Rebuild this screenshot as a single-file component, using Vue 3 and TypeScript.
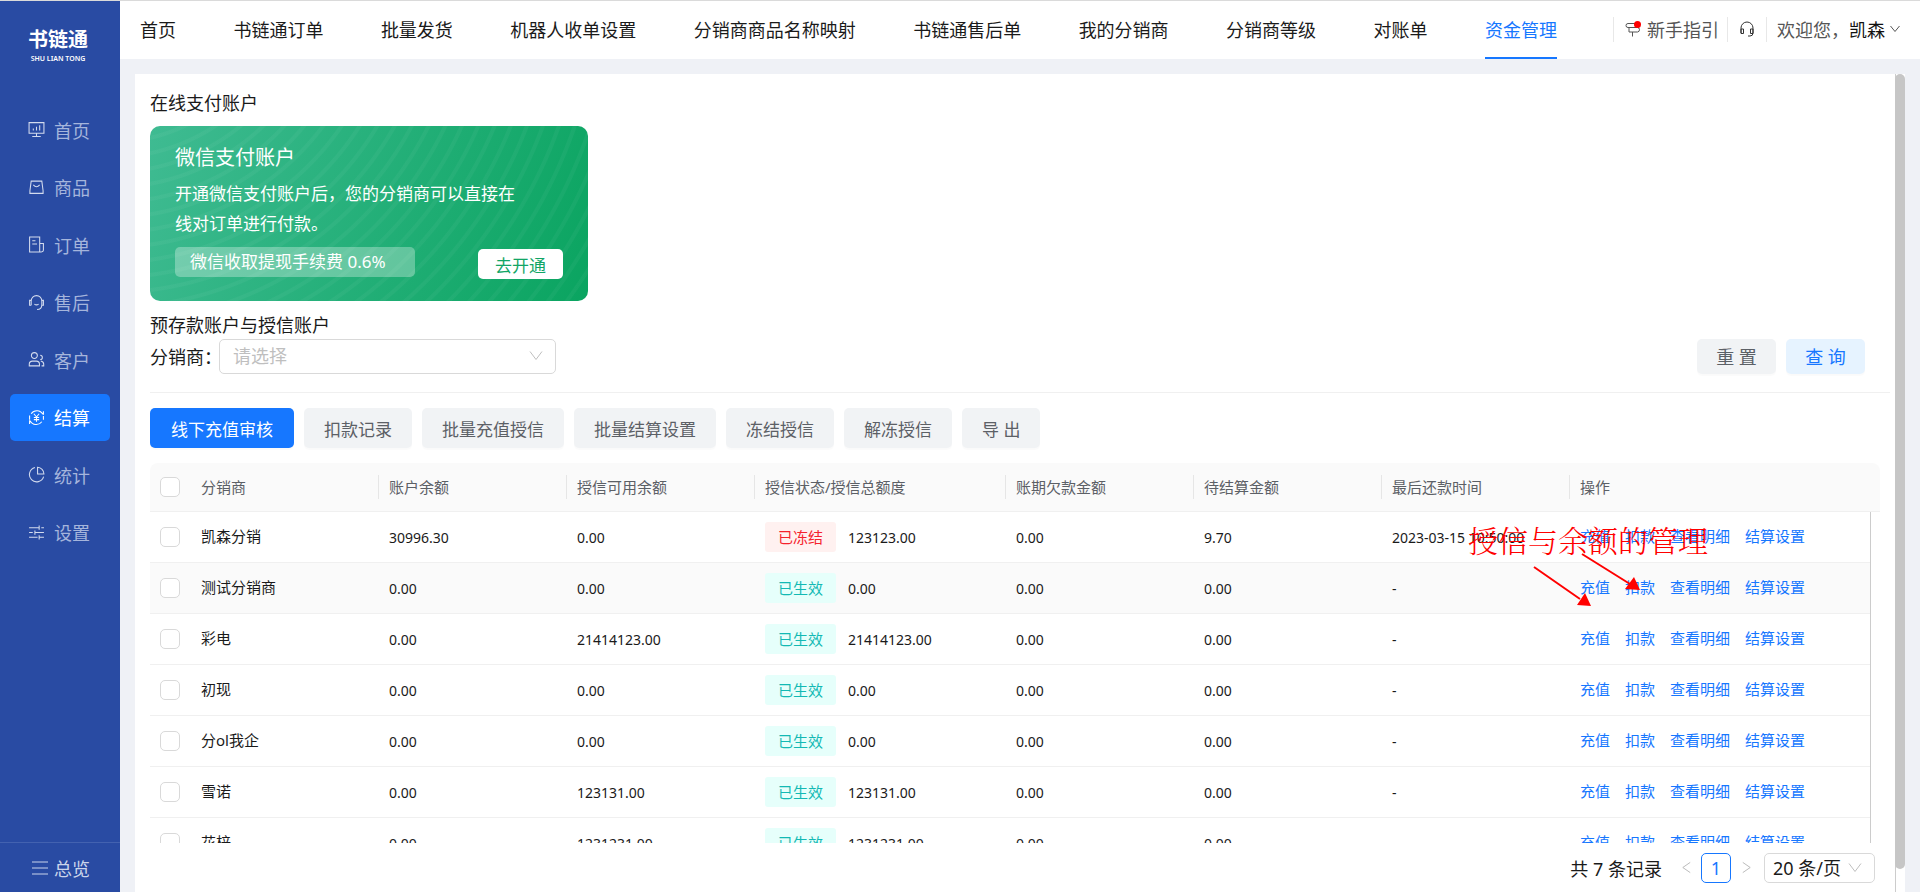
<script setup lang="ts">
import { ref } from 'vue'

interface SideItem { label: string; icon: string }
interface Account {
  name: string
  balance: string
  available: string
  frozen: boolean
  total: string
  debt: string
  pending: string
  repaid: string
}

const topNav: string[] = ['首页', '书链通订单', '批量发货', '机器人收单设置', '分销商商品名称映射', '书链通售后单', '我的分销商', '分销商等级', '对账单', '资金管理']
const activeTop = ref('资金管理')

const sideNav: SideItem[] = [
  { label: '首页', icon: 'M1 1.5h14v10H1zM8 11.5v3M4 14.5h8M5 9V7M8 9V5.500M11 9V4' },
  { label: '商品', icon: 'M3 2h10l1.200 9v2.500H1.800V11zM5 5.500q3 3.500 6 0' },
  { label: '订单', icon: 'M1.500 1h9.500v14H1.500zM11 7h3.500v6.500q0 1.500-2 1.500H9M4 4.500h3M4 7.500h4.500' },
  { label: '售后', icon: 'M3 10.500V6.500a5 5 0 0 1 10 0v3.500c0 3-2 4.500-4.500 4.500M3 6H1.500v4.500H3M13 6h1.500v4.500H13M6 9.500q2 1.500 4 0' },
  { label: '客户', icon: 'M6 1.500a2.800 2.800 0 1 1 0 5.600a2.800 2.800 0 1 1 0-5.600M1.200 14v-1.500q0-3 3-3h3.600q3 0 3 3V14zM11.500 4a2 2 0 1 1 0 4M12 9.500q2.800.5 2.800 3V14h-2' },
  { label: '结算', icon: 'M3 4.500A6.500 6.500 0 0 1 14 5M14.500 2v3.500M13 12A6.500 6.500 0 0 1 2 11M1.500 14v-3.500M1.500 10V6M14.500 10V6.500M5.500 4.500L8 7.500l2.500-3M8 7.500V12M5.500 8h5M5.500 10h5' },
  { label: '统计', icon: 'M6.500 1.500A6.800 6.800 0 1 0 14.700 10M9 1.200V7.500h6A6.300 6.300 0 0 0 9 1.200z' },
  { label: '设置', icon: 'M1 3.500h9M12.500 3.500H15M10.500 1.500v4M1 8h3.500M6.500 8H15M6.500 6v4M1 12.500h8M11 12.500h4M10.500 10.500v4' }
]
const activeSide = ref('结算')

const bulkActions: string[] = ['线下充值审核', '扣款记录', '批量充值授信', '批量结算设置', '冻结授信', '解冻授信', '导 出']
const columns: string[] = ['分销商', '账户余额', '授信可用余额', '授信状态/授信总额度', '账期欠款金额', '待结算金额', '最后还款时间', '操作']
const rowActions: string[] = ['充值', '扣款', '查看明细', '结算设置']

const account = (name: string, credit: string, extra: Partial<Account> = {}): Account => ({
  name, balance: '0.00', available: credit, frozen: false, total: credit, debt: '0.00', pending: '0.00', repaid: '-', ...extra
})

const accounts: Account[] = [
  account('凯森分销', '0.00', { balance: '30996.30', frozen: true, total: '123123.00', pending: '9.70', repaid: '2023-03-15 10:50:00' }),
  account('测试分销商', '0.00'),
  account('彩电', '21414123.00'),
  account('初现', '0.00'),
  account('分ol我企', '0.00'),
  account('雪诺', '123131.00'),
  account('花梓', '1231231.00')
]
const selected = ref<string[]>([])
const toggleAll = (event: Event) => {
  selected.value = (event.target as HTMLInputElement).checked ? accounts.map((a) => a.name) : []
}
</script>

<template>
  <div class="shell">
    <aside class="side">
      <div class="brand">
        <strong>书链通</strong>
        <span>SHU LIAN TONG</span>
      </div>
      <nav class="side-nav">
        <a v-for="item in sideNav" :key="item.label" href="#" :class="{ active: item.label === activeSide }" @click.prevent="activeSide = item.label">
          <svg viewBox="0 0 16 16" aria-hidden="true"><path :d="item.icon" /></svg>
          <span>{{ item.label }}</span>
        </a>
      </nav>
      <button class="overview" type="button">
        <svg viewBox="0 0 16 16" aria-hidden="true"><path d="M0 2h16M0 8h16M0 14h16" /></svg>
        <span>总览</span>
      </button>
    </aside>

    <div class="main">
      <header class="top">
        <nav class="top-nav">
          <a v-for="item in topNav" :key="item" href="#" :class="{ active: item === activeTop }" @click.prevent="activeTop = item">{{ item }}</a>
        </nav>
        <div class="tools">
          <a class="guide" href="#">
            <svg viewBox="0 0 16 16" aria-hidden="true">
              <path d="M10 2.500H3q-2 0-2 2t2 2h10.500v-1M4 6.500v4.500h8.500q2-.2 2-2.300t-2-2.200M7.500 11v4.500" />
              <circle cx="12.500" cy="3.500" r="3.500" />
            </svg>
            <span>新手指引</span>
          </a>
          <button class="support" type="button" aria-label="客服">
            <svg viewBox="0 0 16 16" aria-hidden="true"><path d="M2 12V7a6 6 0 0 1 12 0v5q0 3-3 3H9M2 8h2.500v4.500H2zM14 8h-2.500v4.500H14z" /></svg>
          </button>
          <button class="user" type="button">
            <span>欢迎您，</span><b>凯森</b>
            <svg viewBox="0 0 10 10" aria-hidden="true"><path d="M0.500 2l4.500 5.500L9.500 2" /></svg>
          </button>
        </div>
      </header>

      <div class="page">
        <main class="panel">
          <h2>在线支付账户</h2>
          <section class="pay-card">
            <h3>微信支付账户</h3>
            <p>开通微信支付账户后，您的分销商可以直接在线对订单进行付款。</p>
            <div class="pay-foot">
              <span class="fee">微信收取提现手续费 0.6%</span>
              <button type="button">去开通</button>
            </div>
          </section>

          <h2 class="second">预存款账户与授信账户</h2>
          <form class="filter" @submit.prevent>
            <label for="dealer">分销商：</label>
            <div class="select dealer">
              <select id="dealer"><option>请选择</option></select>
              <svg viewBox="0 0 14 14" aria-hidden="true"><path d="M1 2.500l6 8 6-8" /></svg>
            </div>
            <button class="btn reset" type="reset">重 置</button>
            <button class="btn query" type="submit">查 询</button>
          </form>

          <div class="bulk">
            <button v-for="(label, i) in bulkActions" :key="label" type="button" class="btn" :class="{ primary: i === 0 }">{{ label }}</button>
          </div>

          <div class="grid-head">
            <table>
              <colgroup><col class="c-check"><col v-for="c in columns" :key="c" :class="{ 'c-status': c.includes('/'), 'c-ops': c === '操作' }"></colgroup>
              <thead>
                <tr>
                  <th class="check"><input type="checkbox" aria-label="全选" @change="toggleAll"></th>
                  <th v-for="c in columns" :key="c" scope="col">{{ c }}</th>
                </tr>
              </thead>
            </table>
          </div>
          <div class="grid-body">
            <table aria-label="分销商账户">
              <colgroup><col class="c-check"><col v-for="c in columns" :key="c" :class="{ 'c-status': c.includes('/'), 'c-ops': c === '操作' }"></colgroup>
              <tbody>
                <tr v-for="(row, i) in accounts" :key="row.name" :class="{ hover: i === 1 }">
                  <td class="check"><input v-model="selected" type="checkbox" :value="row.name" :aria-label="row.name"></td>
                  <td class="text">{{ row.name }}</td>
                  <td class="num">{{ row.balance }}</td>
                  <td class="num">{{ row.available }}</td>
                  <td><span class="tag" :class="{ frozen: row.frozen }">{{ row.frozen ? '已冻结' : '已生效' }}</span><span class="num">{{ row.total }}</span></td>
                  <td class="num">{{ row.debt }}</td>
                  <td class="num">{{ row.pending }}</td>
                  <td class="num">{{ row.repaid }}</td>
                  <td class="text"><div class="ops"><a v-for="op in rowActions" :key="op" href="#" @click.prevent>{{ op }}</a></div></td>
                </tr>
              </tbody>
            </table>
          </div>

          <footer class="pager">
            <span class="count">共 7 条记录</span>
            <button type="button" class="arrow" aria-label="上一页"><svg viewBox="0 0 14 14" aria-hidden="true"><path d="M11 1.500L3 7l8 5.500" /></svg></button>
            <button type="button" class="current">1</button>
            <button type="button" class="arrow" aria-label="下一页"><svg viewBox="0 0 14 14" aria-hidden="true"><path d="M3 1.500L11 7l-8 5.500" /></svg></button>
            <div class="select size">
              <select aria-label="每页条数"><option>20 条/页</option></select>
              <svg viewBox="0 0 14 14" aria-hidden="true"><path d="M1 2.500l6 8 6-8" /></svg>
            </div>
          </footer>
        </main>
        <div class="track"><div class="thumb"></div></div>
      </div>
    </div>

    <div class="note">
      <span>授信与余额的管理</span>
      <svg viewBox="0 0 120 54" aria-hidden="true">
        <path d="M4 15L50 47M52 2L100 32" />
        <polygon points="55,41 61,54 47,53" />
        <polygon points="104,25 110,38 95,37" />
      </svg>
    </div>
  </div>
</template>

<style>
body { margin: 0; background: #eff1f6; }
</style>

<style scoped>
* { box-sizing: border-box; }
.shell {
  position: relative;
  display: flex;
  height: 100vh;
  overflow: hidden;
  border-top: 1px solid #dadada;
  background: #eff1f6;
  color: #1a1a1a;
  font-family: "Noto Sans", "Noto Sans CJK SC", sans-serif;
  font-size: 18px;
  font-weight: 400;
}
button, select, input { font: inherit; color: inherit; margin: 0; }
button { padding: 0; border: 0; background: none; cursor: pointer; }
a { color: inherit; text-decoration: none; }
svg { fill: none; stroke: currentColor; flex: none; }
h2, h3, p { margin: 0; font-weight: inherit; }

.side { display: flex; flex-direction: column; flex: none; width: 120px; background: #294ba3; color: #a5b5dc; }
.brand { display: flex; flex-direction: column; align-items: center; height: 100px; padding: 25px 4px 0 0; color: #fff; }
.brand strong { font-size: 20px; line-height: 28px; font-weight: 700; }
.brand span { font-size: 7px; line-height: 9px; font-weight: 600; }
.side-nav { display: grid; grid-template-rows: repeat(8, 1fr); align-items: center; height: 460px; padding: 0 10px; }
.side-nav a { display: flex; align-items: center; gap: 9px; height: 47px; padding-left: 18px; border-radius: 5px; }
.side-nav svg { width: 17px; height: 17px; color: #d3dbee; }
.side-nav a.active { background: #1677ff; color: #fff; }
.side-nav a.active svg { color: #fff; }
.overview { display: flex; align-items: center; gap: 6px; height: 50px; margin-top: auto; padding-left: 32px; border-top: 1px solid #4362b0; color: #cbd5eb; }
.overview svg { width: 16px; height: 16px; }

.main { display: flex; flex-direction: column; flex: 1; min-width: 0; }
.top { display: flex; gap: 56px; height: 58px; flex: none; padding-left: 20px; background: #fff; }
.top-nav { display: flex; flex: 1; justify-content: space-between; white-space: nowrap; }
.top-nav a { height: 58px; line-height: 58px; }
.top-nav a.active { color: #1677ff; border-bottom: 2px solid #1677ff; }
.tools { display: flex; align-items: center; height: 56px; padding-right: 20px; color: #555; white-space: nowrap; }
.tools > * { display: flex; align-items: center; height: 25px; border-left: 1px solid #e8e8e8; }
.guide { gap: 6px; padding: 0 8px 0 11px; }
.guide svg { width: 16px; height: 16px; }
.guide circle { fill: #f00; stroke: none; }
.support { padding: 0 11px; color: #333; }
.support svg { width: 16px; height: 16px; }
.user { padding-left: 10px; }
.user b { color: #111; font-weight: inherit; }
.user svg { width: 10px; height: 10px; margin-left: 5px; }

.page { display: flex; flex: 1; min-height: 0; padding: 15px 15px 0; }
.panel { display: flex; flex-direction: column; flex: 1; min-width: 0; padding: 14px 5px 0 15px; background: #fff; }
h2 { font-size: 18px; line-height: 30px; }
.second { margin-top: 10px; line-height: 28px; }
.pay-card {
  width: 438px;
  margin-top: 8px;
  padding: 17px 25px 22px;
  border-radius: 10px;
  color: #fff;
  font-size: 17px;
  background:
    repeating-radial-gradient(circle at -40px -160px, transparent 0 9px, rgba(255, 255, 255, 0.04) 10px 13px, transparent 14px 15px),
    linear-gradient(110deg, #3fbb92, #0aa460);
}
.pay-card h3 { font-size: 20px; line-height: 30px; }
.pay-card p { width: 350px; margin-top: 6px; line-height: 30px; }
.pay-foot { display: flex; justify-content: space-between; height: 32px; margin-top: 8px; }
.fee { align-self: flex-start; width: 240px; padding-left: 15px; line-height: 30px; border-radius: 5px; background: rgba(255, 255, 255, 0.3); }
.pay-foot button { align-self: flex-end; width: 85px; height: 30px; border-radius: 5px; background: #fff; color: #12a566; }

.filter { display: flex; align-items: center; height: 54px; padding: 0 25px 19px 0; border-bottom: 1px solid #f0f0f0; }
.filter label { width: 69px; white-space: nowrap; }
.select { position: relative; }
.select select { width: 100%; height: 100%; border: 1px solid #d9d9d9; border-radius: 5px; background: #fff; appearance: none; }
.select svg { position: absolute; top: 50%; right: 13px; width: 14px; height: 14px; margin-top: -7px; color: #bfbfbf; pointer-events: none; }
.dealer { width: 337px; height: 35px; margin-right: auto; }
.dealer select { padding: 0 13px; color: #bfbfbf; }
.btn { height: 40px; padding: 0 20px; border-radius: 5px; background: #f1f3f5; color: #5c6066; box-shadow: 0 2px 1px rgba(0, 0, 0, 0.02); white-space: nowrap; }
.filter .btn { height: 35px; width: 79px; padding: 0; margin-left: 10px; }
.btn.query { background: #e6f3ff; color: #1677ff; }
.bulk { display: flex; gap: 10px; margin: 15px 0; font-size: 17px; }
.btn.primary { padding: 0 21px; background: #1677ff; color: #fff; }

.grid-head { margin-right: 10px; padding-right: 10px; border-radius: 8px 8px 0 0; background: #fafafa; border-bottom: 1px solid #f0f0f0; }
.grid-body { flex: 1; min-height: 0; overflow: hidden; margin-right: 19px; border-right: 1px solid #ccc; }
table { width: 100%; table-layout: fixed; border-collapse: separate; border-spacing: 0; font-size: 15px; }
col { width: 188px; }
.c-check { width: 40px; }
.c-status { width: 251px; }
.c-ops { width: 301px; }
th { position: relative; height: 48px; padding: 0 11px 2px; text-align: left; font-weight: inherit; color: #5c6066; white-space: nowrap; }
th:nth-child(n + 3)::before { content: ""; position: absolute; left: 0; top: 12px; width: 1px; height: 24px; background: #e6e6e6; }
td { height: 51px; padding: 0 11px; border-bottom: 1px solid #f0f0f0; white-space: nowrap; }
td.text { padding-bottom: 3px; }
tr.hover td { background: #fafafa; }
.num { font-size: 14px; }
.check { padding: 0 10px; line-height: 0; }
input[type="checkbox"] { width: 20px; height: 20px; border: 1px solid #d9d9d9; border-radius: 5px; background: #fff; appearance: none; vertical-align: middle; }
input[type="checkbox"]:checked { background: #1677ff; }
.tag { display: inline-block; margin-right: 12px; padding: 0 13px; line-height: 30px; border-radius: 3px; background: #e6fffb; color: #13b9b4; }
.tag.frozen { background: #fff1f0; color: #f5222d; }
.ops { display: flex; gap: 15px; color: #1677ff; }

.pager { display: flex; align-items: center; justify-content: flex-end; flex: none; height: 49px; padding-right: 15px; }
.count { margin-right: 9px; }
.arrow { display: flex; align-items: center; justify-content: center; width: 30px; height: 30px; color: #b5b5b5; }
.arrow svg { width: 13px; height: 13px; }
.current { width: 30px; height: 30px; border: 1px solid #1677ff; border-radius: 5px; color: #1677ff; }
.size { width: 111px; height: 30px; margin-left: 3px; }
.size select { padding: 0 8px; }

.track { flex: none; width: 10px; background: #fff; border-left: 1px solid #ccc; }
.thumb { height: 795px; max-height: 98%; margin-left: -1px; border-radius: 5px; background: #c6c6c6; }

.note { position: absolute; top: 520px; right: 212px; width: 240px; color: #f00; pointer-events: none; }
.note span { display: block; height: 31px; font-family: "Liberation Serif", "Noto Serif CJK SC", "Noto Sans CJK SC", serif; font-size: 30px; font-weight: 300; line-height: 42px; white-space: nowrap; }
.note svg { display: block; width: 120px; height: 54px; margin-left: 62px; stroke-width: 2; }
.note polygon { fill: #f00; stroke: none; }
</style>
